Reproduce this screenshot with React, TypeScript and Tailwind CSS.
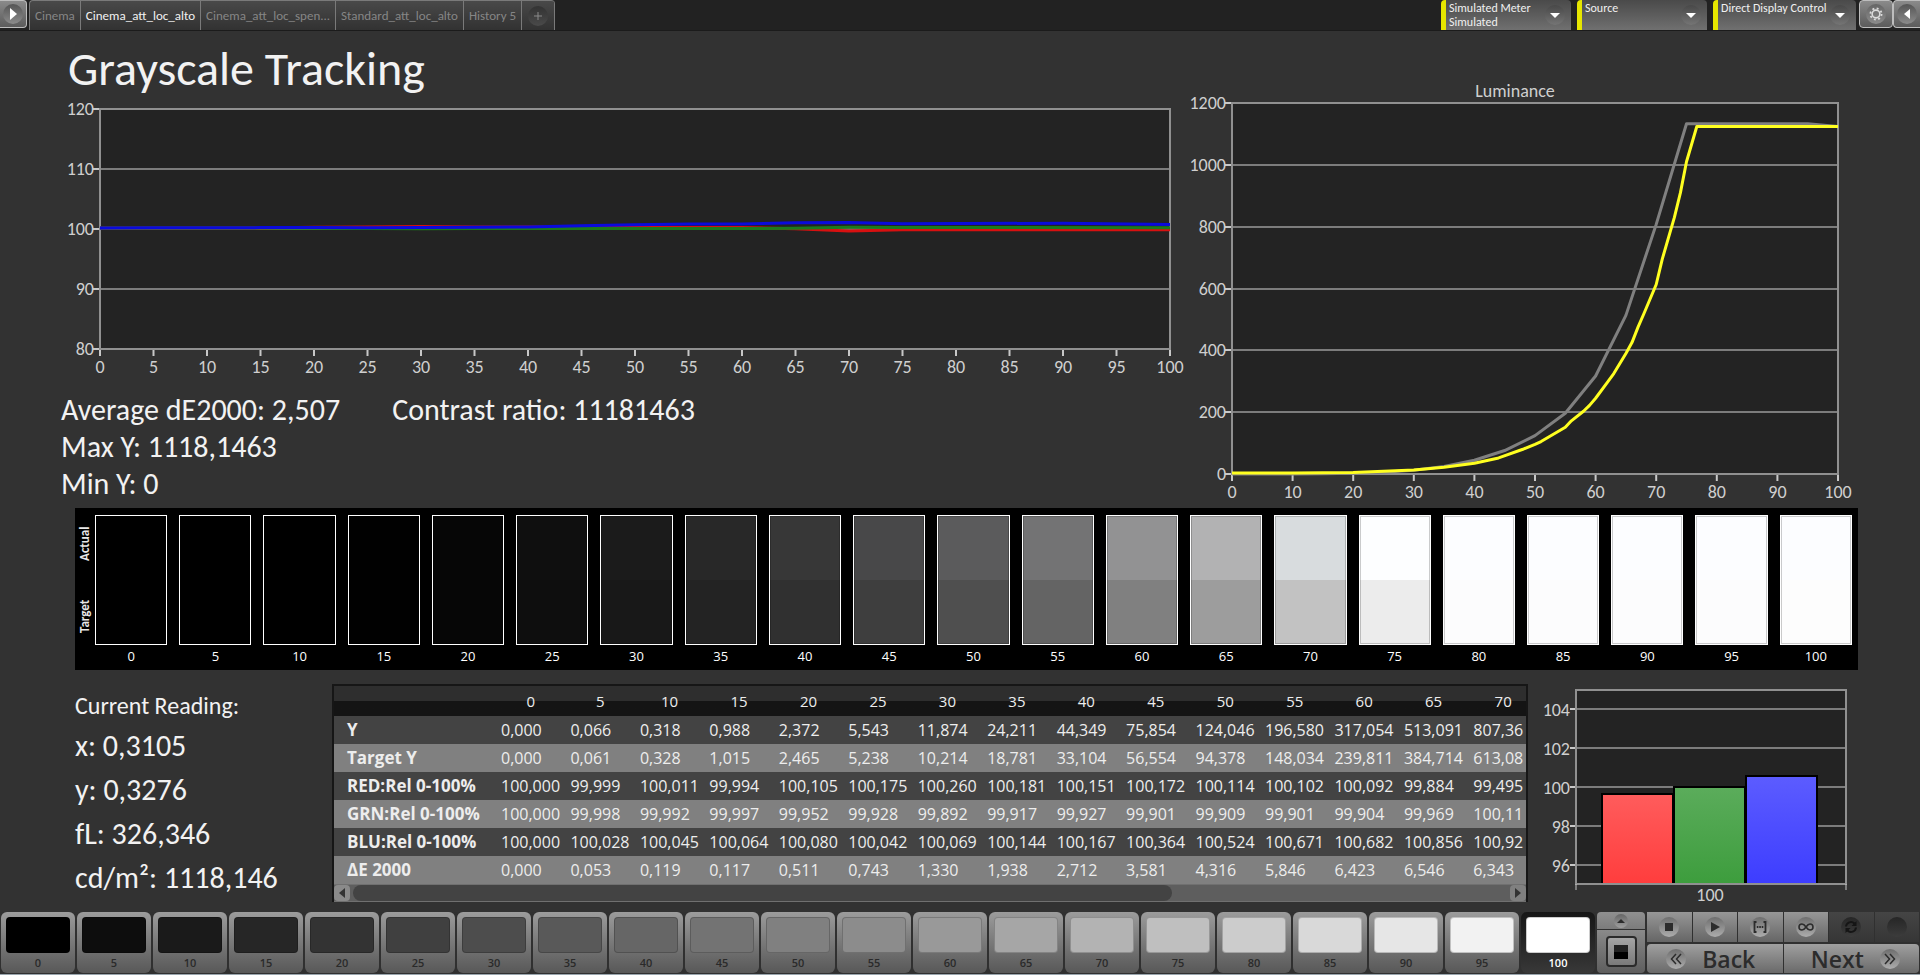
import { ReactNode, useState } from 'react';
import clsx from 'clsx';

const LEVELS = Array.from({ length: 21 }, (_, i) => i * 5);

const TABS = ['Cinema', 'Cinema_att_loc_alto', 'Cinema_att_loc_spen...', 'Standard_att_loc_alto', 'History 5'];

const ROWS: [string, string[]][] = [
  ['Y', ['0,000', '0,066', '0,318', '0,988', '2,372', '5,543', '11,874', '24,211', '44,349', '75,854', '124,046', '196,580', '317,054', '513,091', '807,36']],
  ['Target Y', ['0,000', '0,061', '0,328', '1,015', '2,465', '5,238', '10,214', '18,781', '33,104', '56,554', '94,378', '148,034', '239,811', '384,714', '613,08']],
  ['RED:Rel 0-100%', ['100,000', '99,999', '100,011', '99,994', '100,105', '100,175', '100,260', '100,181', '100,151', '100,172', '100,114', '100,102', '100,092', '99,884', '99,495']],
  ['GRN:Rel 0-100%', ['100,000', '99,998', '99,992', '99,997', '99,952', '99,928', '99,892', '99,917', '99,927', '99,901', '99,909', '99,901', '99,904', '99,969', '100,11']],
  ['BLU:Rel 0-100%', ['100,000', '100,028', '100,045', '100,064', '100,080', '100,042', '100,069', '100,144', '100,167', '100,364', '100,524', '100,671', '100,682', '100,856', '100,92']],
  ['ΔE 2000', ['0,000', '0,053', '0,119', '0,117', '0,511', '0,743', '1,330', '1,938', '2,712', '3,581', '4,316', '5,846', '6,423', '6,546', '6,343']],
];

// [actual, target] for every stimulus level
const SWATCHES = [
  ['#000000', '#000000'],
  ['#000000', '#000000'],
  ['#000000', '#000000'],
  ['#010101', '#010101'],
  ['#060606', '#060606'],
  ['#0f0f0f', '#0e0e0e'],
  ['#1b1b1b', '#181818'],
  ['#282828', '#232323'],
  ['#373737', '#303030'],
  ['#484849', '#3e3e3e'],
  ['#5b5b5c', '#4f4f4f'],
  ['#737374', '#646464'],
  ['#929293', '#808080'],
  ['#b2b2b3', '#9d9d9d'],
  ['#d8dcde', '#c2c2c2'],
  ['#fdfeff', '#ececec'],
  ['#fcfdff', '#fcfcfd'],
  ['#fcfdff', '#fcfcfd'],
  ['#fcfdff', '#fcfcfd'],
  ['#fcfdff', '#fcfcfd'],
  ['#fcfdff', '#fdfdfd'],
];

const num = (s: string) => parseFloat(s.replace(',', '.'));
const toPoints = (row: number): number[][] => ROWS[row][1].map((v, i) => [i * 5, num(v)]);

const RED = [...toPoints(2), [75, 99.7], [100, 99.7]];
const GREEN = [...toPoints(3), [75, 100.1], [100, 100.05]];
const BLUE = [...toPoints(4), [75, 100.7], [90, 100.8], [100, 100.6]];

const ACTUAL_Y = [...toPoints(0), [75, 1133], [95, 1133], [100, 1124]];
const TARGET_Y = [
  [0, 3], [10, 3], [20, 5], [30, 13], [35, 22], [40, 35], [44, 52], [48, 80], [50, 96], [51, 105], [55, 151],
  [56, 172], [58, 203], [59, 222], [60, 245], [62, 298], [63, 325], [65, 390], [66, 425], [67, 475], [68, 520],
  [70, 613], [71, 695], [73, 830], [74, 910], [75, 1010], [76.7, 1124], [100, 1124],
];

type Series = { color: string; points: number[][]; shift?: number };

type ChartProps = {
  label: string;
  title?: string;
  size: [number, number];
  plot: [number, number, number, number];
  yRange: [number, number];
  yTicks: number[];
  xTicks: number[];
  series: Series[];
};

function LineChart({ label, title, size, plot, yRange, yTicks, xTicks, series }: ChartProps) {
  const [x0, y0, x1, y1] = plot;
  const px = (v: number) => x0 + (v / 100) * (x1 - x0);
  const py = (v: number) => y1 - ((v - yRange[0]) / (yRange[1] - yRange[0])) * (y1 - y0);

  return (
    <svg viewBox={`0 0 ${size[0]} ${size[1]}`} className="block w-full" role="img" aria-label={label}>
      <rect x={x0} y={y0} width={x1 - x0} height={y1 - y0} fill="#232323" />
      {yTicks.map((t) => (
        <g key={t}>
          <line x1={x0} x2={x1} y1={Math.round(py(t))} y2={Math.round(py(t))} stroke="#7c7c7c" strokeWidth="2" />
          <line x1={x0 - 7} x2={x0} y1={Math.round(py(t))} y2={Math.round(py(t))} stroke="#c8c8c8" strokeWidth="2" />
          <text x={x0 - 6} y={Math.round(py(t)) + 6} textAnchor="end" fontSize="18" fill="#cfcfcf">
            {t}
          </text>
        </g>
      ))}
      <rect x={x0} y={y0} width={x1 - x0} height={y1 - y0} fill="none" stroke="#909090" strokeWidth="2" />
      {xTicks.map((t) => (
        <g key={t}>
          <line x1={px(t)} x2={px(t)} y1={y1 + 1} y2={y1 + 7} stroke="#c8c8c8" strokeWidth="2" />
          <text x={px(t)} y={y1 + 24} textAnchor="middle" fontSize="18" fill="#cfcfcf">
            {t}
          </text>
        </g>
      ))}
      {series.map((s) => (
        <polyline
          key={s.color}
          points={s.points.map(([x, y]) => `${px(x)},${py(y) - (s.shift ?? 0)}`).join(' ')}
          fill="none"
          stroke={s.color}
          strokeWidth="3"
          strokeLinejoin="round"
        />
      ))}
      {title && (
        <text x={(x0 + x1) / 2 - 20} y="17" textAnchor="middle" fontSize="18" fill="#cfcfcf">
          {title}
        </text>
      )}
    </svg>
  );
}

const BARS = [
  { x: 66, value: 99.62, fill: 'url(#barRed)' },
  { x: 138, value: 100, fill: 'url(#barGreen)' },
  { x: 210, value: 100.55, fill: 'url(#barBlue)' },
];

function RgbBars() {
  const py = (v: number) => Math.round(204 - (v - 95) * 19.4);
  return (
    <svg viewBox="0 0 324 225" className="block w-full" role="img" aria-label="RGB levels">
      <defs>
        <linearGradient id="barRed" x2="0" y2="1">
          <stop stopColor="#ff5c5c" />
          <stop offset="1" stopColor="#ff3d3d" />
        </linearGradient>
        <linearGradient id="barGreen" x2="0" y2="1">
          <stop stopColor="#5bac5b" />
          <stop offset="1" stopColor="#3d9d3d" />
        </linearGradient>
        <linearGradient id="barBlue" x2="0" y2="1">
          <stop stopColor="#5c5cff" />
          <stop offset="1" stopColor="#3d3dff" />
        </linearGradient>
      </defs>
      <rect x="40" y="10" width="270" height="194" fill="#232323" />
      {[96, 98, 100, 102, 104].map((t) => (
        <g key={t}>
          <line x1="40" x2="310" y1={py(t)} y2={py(t)} stroke="#7c7c7c" strokeWidth="2" />
          <line x1="34" x2="40" y1={py(t)} y2={py(t)} stroke="#c8c8c8" strokeWidth="2" />
          <text x="34" y={py(t) + 7} textAnchor="end" fontSize="18" fill="#cfcfcf">
            {t}
          </text>
        </g>
      ))}
      {BARS.map((b) => (
        <rect key={b.x} x={b.x} y={py(b.value)} width="71" height={204 - py(b.value)} fill={b.fill} stroke="#000" strokeWidth="2" />
      ))}
      <rect x="40" y="10" width="270" height="194" fill="none" stroke="#909090" strokeWidth="2" />
      <path d="M40 204v6M310 204v6" stroke="#c8c8c8" strokeWidth="1" />
      <text x="174" y="221" textAnchor="middle" fontSize="18" fill="#cfcfcf">
        100
      </text>
    </svg>
  );
}

function Knob({ children, dark }: { children?: ReactNode; dark?: boolean }) {
  return (
    <span
      className={clsx(
        'flex size-5 shrink-0 items-center justify-center rounded-full bg-linear-to-b',
        dark ? 'from-[#262626] to-[#3c3c3c]' : 'from-[#6e6e6e] to-[#adadad]'
      )}
    >
      {children}
    </span>
  );
}

function Device({ name, detail, wide }: { name: string; detail?: string; wide?: boolean }) {
  return (
    <button
      className={clsx(
        'flex h-[30px] items-start overflow-hidden rounded-t border-l-[5px] border-[#e6e600] bg-linear-to-b from-[#4a4a4a] to-[#707070] pl-[3px] text-left text-xs leading-[14px] text-[#f0f0f0]',
        wide ? 'w-[143px]' : 'w-[130px]'
      )}
    >
      <span className="flex-1 whitespace-nowrap pt-px">
        {name}
        {detail && <span className="block">{detail}</span>}
      </span>
      <span className="mt-[5px] mr-1.5 flex size-5 items-center justify-center rounded-full bg-linear-to-b from-[#484848] to-[#757575]">
        <svg viewBox="0 0 12 6" className="w-2.5">
          <path d="M0 0h12L6 6z" fill="#fff" />
        </svg>
      </span>
    </button>
  );
}

function TopBar() {
  const [active, setActive] = useState(1);
  return (
    <header className="flex h-[31px] items-start border-b border-[#1b1b1b] bg-[#222]">
      <button
        aria-label="Open panel"
        className="mr-0.5 flex h-7 w-[27px] items-center justify-center rounded-r border border-l-0 border-[#bdbdbd] bg-linear-to-b from-[#8a8a8a] to-[#5c5c5c]"
      >
        <span className="flex size-5 items-center justify-center rounded-full bg-linear-to-b from-[#555] to-[#8c8c8c]">
          <svg viewBox="0 0 7 12" className="h-3">
            <path d="M0 0l7 6-7 6z" fill="#fff" />
          </svg>
        </span>
      </button>
      <nav className="flex h-[30px] overflow-hidden rounded-t border-t border-l border-[#7a7a7a] bg-linear-to-b from-[#494949] to-[#323232]">
        {TABS.map((tab, i) => (
          <button
            key={tab}
            onClick={() => setActive(i)}
            className={clsx('border-r border-[#7a7a7a] px-[5px] text-[13px]', i === active ? 'text-[#f2f2f2]' : 'text-[#868686]')}
          >
            {tab}
          </button>
        ))}
        <button aria-label="Add tab" className="flex w-[33px] items-center justify-center border-r border-[#7a7a7a]">
          <span className="flex size-5 items-center justify-center rounded-full bg-linear-to-b from-[#333] to-[#4a4a4a]">
            <svg viewBox="0 0 8 8" className="w-2">
              <path d="M4 0v8M0 4h8" stroke="#8a8a8a" />
            </svg>
          </span>
        </button>
      </nav>
      <div className="ml-auto flex">
        <div className="mr-[3px] flex gap-[6px]">
          <Device name="Simulated Meter" detail="Simulated" />
          <Device name="Source" />
          <Device name="Direct Display Control" wide />
        </div>
        <button
          aria-label="Settings"
          className="flex h-7 w-[34px] items-center justify-center rounded border border-[#bdbdbd] bg-linear-to-b from-[#8a8a8a] to-[#5c5c5c]"
        >
          <span className="flex size-5 items-center justify-center rounded-full bg-linear-to-b from-[#666] to-[#8c8c8c]">
            <svg viewBox="0 0 16 16" className="w-3.5" fill="none" stroke="#dcdcdc">
              <circle cx="8" cy="8" r="4.4" strokeWidth="1.8" />
              <circle cx="8" cy="8" r="6.4" strokeWidth="2" strokeDasharray="2.2 2.83" />
            </svg>
          </span>
        </button>
        <button
          aria-label="Close panel"
          className="flex h-7 w-[27px] items-center justify-center rounded-l border border-r-0 border-[#bdbdbd] bg-linear-to-b from-[#8a8a8a] to-[#5c5c5c]"
        >
          <span className="flex size-5 items-center justify-center rounded-full bg-linear-to-b from-[#555] to-[#8c8c8c]">
            <svg viewBox="0 0 6 10" className="h-2.5">
              <path d="M6 0L0 5l6 5z" fill="#fff" />
            </svg>
          </span>
        </button>
      </div>
    </header>
  );
}

function SwatchStrip() {
  return (
    <section className="mt-[3px] mr-0.5 ml-[15px] flex bg-black pt-[7px] pr-1.5 pb-1">
      <div className="flex h-[130px] w-5 flex-col gap-3.5 text-[13px] leading-5 font-bold text-[#e8e8e8]">
        <span className="flex flex-1 rotate-180 items-center justify-center [writing-mode:vertical-rl]">Actual</span>
        <span className="flex flex-1 rotate-180 items-center justify-center [writing-mode:vertical-rl]">Target</span>
      </div>
      <div className="flex flex-1 gap-3">
        {SWATCHES.map(([actual, target], i) => (
          <div key={i} className="flex-1 text-center">
            <div className="flex h-[130px] flex-col border border-white">
              <div className="flex-1 border border-b-0 border-black/20" style={{ backgroundColor: actual }} />
              <div className="flex-1 border border-t-0 border-black/20" style={{ backgroundColor: target }} />
            </div>
            <div className="pt-px font-['Open_Sans',sans-serif] text-[13px] leading-5 font-medium text-white">{LEVELS[i]}</div>
          </div>
        ))}
      </div>
    </section>
  );
}

function ReadingsTable() {
  return (
    <div className="overflow-hidden border-x-2 border-t-2 border-[#161616]">
      <table className="w-[calc(100%+10px)] table-fixed font-['Open_Sans',sans-serif] text-base leading-7 text-[#ededed]">
        <thead>
          <tr className="h-[30px] bg-linear-to-b from-[#2e2e2e] from-50% to-[#141414] to-50% text-[15px]">
            <td className="w-40 p-0" />
            {LEVELS.slice(0, 15).map((l) => (
              <th key={l} scope="col" className="p-0 pl-1 text-center font-normal">
                {l}
              </th>
            ))}
          </tr>
        </thead>
        <tbody>
          {ROWS.map(([label, values]) => (
            <tr key={label} className="h-7 bg-[#434343] even:bg-[#808080]">
              <th scope="row" className="p-0 pl-[13px] text-left text-[17px] leading-7 font-bold whitespace-nowrap">
                {label}
              </th>
              {values.map((v, i) => (
                <td key={i} className="p-0 pl-[7px] whitespace-nowrap">
                  {v}
                </td>
              ))}
            </tr>
          ))}
        </tbody>
      </table>
      <div className="flex h-[18px] items-center border-y border-[#707070] bg-[#5e5e5e]">
        <button aria-label="Scroll left" className="flex size-4 items-center justify-center rounded bg-[#8a8a8a]">
          <svg viewBox="0 0 6 10" className="h-2.5">
            <path d="M6 0L0 5l6 5z" fill="#333" />
          </svg>
        </button>
        <div className="flex flex-1 px-[3px]">
          <div className="h-4 w-[71%] rounded-full bg-[#434343]" />
        </div>
        <button aria-label="Scroll right" className="flex size-4 items-center justify-center rounded bg-[#808080]">
          <svg viewBox="0 0 6 10" className="h-2.5">
            <path d="M0 0l6 5-6 5z" fill="#333" />
          </svg>
        </button>
      </div>
    </div>
  );
}

function PatternButton({ level, selected, onSelect }: { level: number; selected: boolean; onSelect: () => void }) {
  const v = Math.round((level / 100) * 255);
  return (
    <button
      onClick={onSelect}
      className={clsx(
        "flex flex-1 flex-col rounded-md bg-linear-to-b px-[5px] pt-[5px] text-center font-['Open_Sans',sans-serif] text-[11px] leading-5 font-semibold",
        selected ? 'from-[#161616] to-[#383838] text-white' : 'from-[#9c9c9c] to-[#585858] text-[#2a2a2a]'
      )}
    >
      <span
        className="block h-[36px] w-full rounded border border-black/20"
        style={{ backgroundColor: `rgb(${v}, ${v}, ${v})` }}
      />
      <span className="block w-full">{level}</span>
    </button>
  );
}

const mediaIcons: [string, ReactNode][] = [
  ['Stop', <rect key="s" x="4" y="4" width="8" height="8" fill="#2c2c2c" />],
  ['Play', <path key="p" d="M4 3l9 5-9 5z" fill="#2c2c2c" />],
  [
    'Read series',
    <g key="r" stroke="#2c2c2c" fill="none">
      <path d="M4.500 3H2.500v10h2M11.500 3h2v10h-2" strokeWidth="1.800" />
      <path d="M4.800 8h6.500" strokeWidth="1.800" strokeDasharray="1.600 .85" />
    </g>,
  ],
  [
    'Continuous',
    <path
      key="c"
      d="M8 8C6.500 5.800 5.500 5 4 5a3 3 0 0 0 0 6c1.500 0 2.500-.8 4-3s2.500-3 4-3a3 3 0 0 1 0 6c-1.500 0-2.500-.8-4-3z"
      fill="none"
      stroke="#2c2c2c"
      strokeWidth="1.600"
    />,
  ],
];

function Footer() {
  const [selected, setSelected] = useState(100);
  const mediaButton = 'flex flex-1 items-center justify-center bg-linear-to-b from-[#979797] to-[#666]';
  const navButton = 'flex flex-1 items-center justify-center gap-4 bg-linear-to-b from-[#a0a0a0] to-[#6a6a6a]';

  return (
    <footer className="mt-auto flex h-[63px] gap-0.5 border-b border-[#9aa6ae] bg-[#303030] px-px pb-px">
      <div className="flex flex-1 gap-0.5">
        {LEVELS.map((l) => (
          <PatternButton key={l} level={l} selected={l === selected} onSelect={() => setSelected(l)} />
        ))}
      </div>
      <div className="flex w-12 flex-col gap-px">
        <button aria-label="Expand" className="flex h-[17px] items-center justify-center rounded-t bg-linear-to-b from-[#909090] to-[#7c7c7c]">
          <span className="flex size-3.5 items-center justify-center rounded-full bg-linear-to-b from-[#666] to-[#a0a0a0]">
            <svg viewBox="0 0 8 4" className="w-2">
              <path d="M0 4h8L4 0z" fill="#2c2c2c" />
            </svg>
          </span>
        </button>
        <button aria-label="Pattern window" className="flex flex-1 items-center justify-center rounded-b bg-linear-to-b from-[#8a8a8a] to-[#5e5e5e]">
          <span className="flex size-[31px] items-center justify-center rounded border-2 border-[#2a2a2a] bg-linear-to-b from-[#a5a5a5] to-[#7a7a7a]">
            <span className="size-3.5 bg-linear-to-b from-[#222] from-50% to-black to-50%" />
          </span>
        </button>
      </div>
      <div className="flex w-[272px] flex-col gap-0.5">
        <div className="flex h-[30px] gap-px">
          {mediaIcons.map(([label, icon]) => (
            <button key={label} aria-label={label} className={mediaButton}>
              <Knob>
                <svg viewBox="0 0 16 16" className="size-4">
                  {icon}
                </svg>
              </Knob>
            </button>
          ))}
          <button aria-label="Refresh" className="flex flex-1 items-center justify-center bg-linear-to-b from-[#454545] to-[#363636]">
            <Knob dark>
              <svg viewBox="0 0 16 16" className="size-4" fill="none" stroke="#151515" strokeWidth="2">
                <path d="M3 7.500A5 5 0 0 1 11.500 4.500M13 8.500A5 5 0 0 1 4.500 11.500" />
                <path d="M13.500 2v5h-5zM2.500 14V9h5z" fill="#151515" stroke="none" />
              </svg>
            </Knob>
          </button>
          <button aria-label="Record" className="flex flex-1 items-center justify-center bg-linear-to-b from-[#454545] to-[#363636]">
            <Knob dark />
          </button>
        </div>
        <div className="flex flex-1 gap-px font-['Open_Sans',sans-serif] text-[23px] leading-7 font-semibold text-[#2c2c2c]">
          <button className={clsx(navButton, 'rounded-l pr-2')}>
            <Knob>
              <svg viewBox="0 0 12 12" className="size-3" fill="none" stroke="#2c2c2c" strokeWidth="1.500">
                <path d="M6 1L1.500 6 6 11M11 1L6.500 6l4.500 5" />
              </svg>
            </Knob>
            Back
          </button>
          <button className={clsx(navButton, 'rounded-r pl-2')}>
            Next
            <Knob>
              <svg viewBox="0 0 12 12" className="size-3" fill="none" stroke="#2c2c2c" strokeWidth="1.500">
                <path d="M6 1l4.500 5L6 11M1 1l4.500 5L1 11" />
              </svg>
            </Knob>
          </button>
        </div>
      </div>
    </footer>
  );
}

export default function App() {
  return (
    <div className="flex min-h-screen flex-col bg-[#323232] font-['Carlito','Lato',sans-serif] text-[#f2f2f2]">
      <TopBar />
      <main className="px-[60px]">
        <div className="grid grid-cols-[1126fr_674fr] items-start">
          <section className="pt-4">
            <h1 className="pl-2 text-5xl leading-[44px]">Grayscale Tracking</h1>
            <div className="mt-1.5">
              <LineChart
                label="RGB balance"
                size={[1126, 282]}
                plot={[40, 12, 1110, 252]}
                yRange={[80, 120]}
                yTicks={[80, 90, 100, 110, 120]}
                xTicks={LEVELS}
                series={[
                  { color: '#d81010', points: RED, shift: 1 },
                  { color: '#1c7a1c', points: GREEN, shift: 1 },
                  { color: '#0a0adc', points: BLUE, shift: 1 },
                ]}
              />
            </div>
            <div className="mt-3 pl-px text-[30px] leading-[37px]">
              <div className="flex gap-[52px]">
                <p>Average dE2000: 2,507</p>
                <p>Contrast ratio: 11181463</p>
              </div>
              <p>Max Y: 1118,1463</p>
              <p>Min Y: 0</p>
            </div>
          </section>
          <section className="pt-[49px]">
            <LineChart
              label="Luminance"
              title="Luminance"
              size={[674, 425]}
              plot={[46, 23, 652, 394]}
              yRange={[0, 1200]}
              yTicks={[0, 200, 400, 600, 800, 1000, 1200]}
              xTicks={[0, 10, 20, 30, 40, 50, 60, 70, 80, 90, 100]}
              series={[
                { color: '#808080', points: ACTUAL_Y },
                { color: '#ffff20', points: TARGET_Y },
              ]}
            />
          </section>
        </div>

        <SwatchStrip />

        <div className="mt-[10px] grid grid-cols-[272fr_1196fr_8fr_324fr] items-start">
          <section className="pt-2 pl-[15px] text-[30px] leading-[44px]">
            <h2 className="text-2xl leading-9">Current Reading:</h2>
            <p>x: 0,3105</p>
            <p>y: 0,3276</p>
            <p>fL: 326,346</p>
            <p>cd/m²: 1118,146</p>
          </section>
          <div className="min-w-0 pt-1">
            <ReadingsTable />
          </div>
          <div />
          <RgbBars />
        </div>
      </main>
      <Footer />
    </div>
  );
}
